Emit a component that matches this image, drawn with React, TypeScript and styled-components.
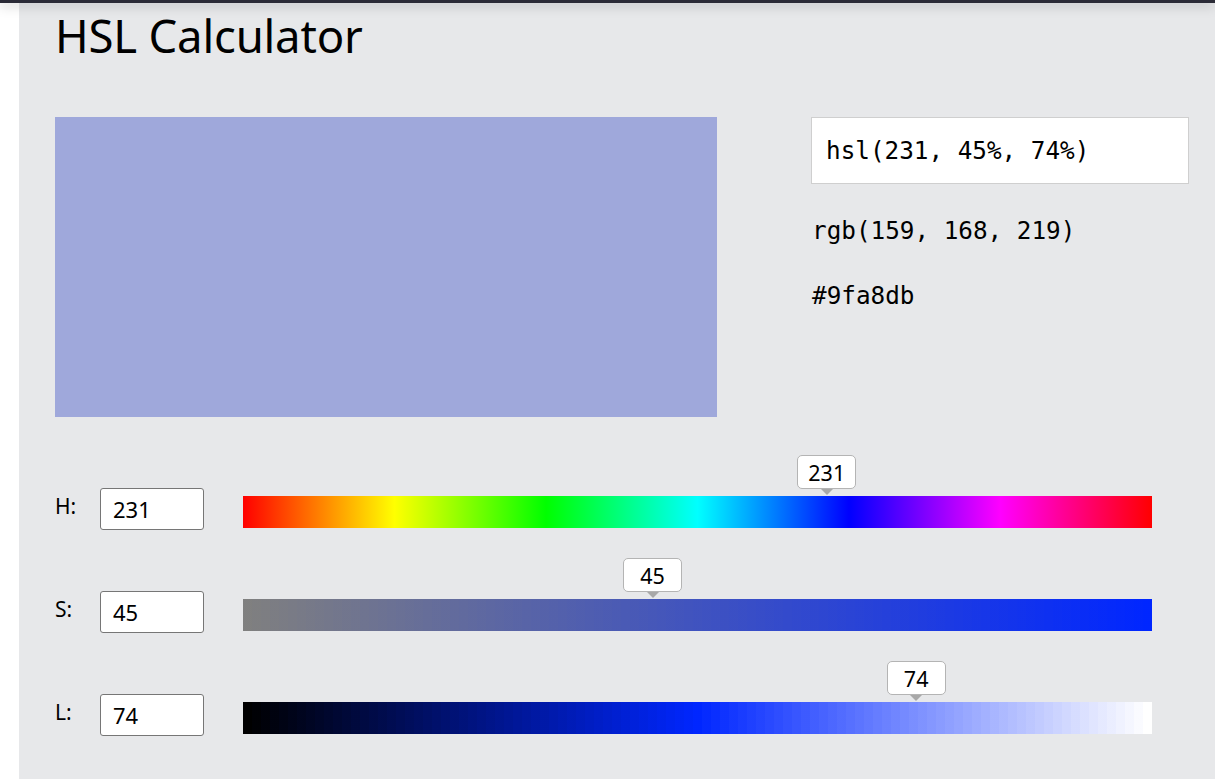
import React, { useState } from "react";
import styled, { createGlobalStyle } from "styled-components";

const GlobalStyle = createGlobalStyle`
  html, body {
    margin: 0;
    padding: 0;
    background: #ffffff;
    font-family: "Noto Sans", "Open Sans", sans-serif;
    color: #000;
  }
`;

const TopBar = styled.div`
  height: 3px;
  background: #2b2b37;
  box-shadow: 0 2px 12px rgba(0, 0, 0, 0.35);
  position: relative;
  z-index: 2;
`;

const Page = styled.div`
  margin-left: 19px;
  background: #e7e8ea;
  min-height: 776px;
  padding: 0 26px 0 36px;
  box-sizing: border-box;
`;

const Title = styled.h1`
  margin: 0;
  padding-top: 2px;
  height: 114px;
  box-sizing: border-box;
  font-size: 45.5px;
  font-weight: 400;
  line-height: 60px;
  letter-spacing: -0.2px;
`;

const Top = styled.div`
  display: flex;
  gap: 94px;
`;

const Swatch = styled.div<{ $color: string }>`
  width: 662px;
  height: 300px;
  background: ${(p) => p.$color};
`;

const Codes = styled.div`
  width: 378px;
  display: flex;
  flex-direction: column;
  font-family: "DejaVu Sans Mono", "Liberation Mono", monospace;
  font-size: 24.3px;
`;

const CodeBox = styled.div`
  height: 67px;
  margin-bottom: 14px;
  box-sizing: border-box;
  background: #fff;
  border: 1px solid #cfcfcf;
  padding-left: 14px;
  display: flex;
  align-items: center;
`;

const CodeLine = styled.div`
  height: 65px;
  display: flex;
  align-items: center;
  padding-left: 1px;
`;

const Sliders = styled.div`
  padding-top: 71px;
  display: flex;
  flex-direction: column;
  gap: 61px;
`;

const Row = styled.div`
  display: flex;
  align-items: center;
  height: 42px;
`;

const Label = styled.div`
  width: 45px;
  font-size: 21px;
  margin-top: -6px;
`;

const NumInput = styled.input`
  width: 104px;
  height: 42px;
  box-sizing: border-box;
  border: 1px solid #767676;
  border-radius: 3px;
  background: #fff;
  padding: 0 0 0 12px;
  font-family: "Noto Sans", "Open Sans", sans-serif;
  font-size: 22px;
  color: #000;
  outline: none;
`;

const Track = styled.div<{ $bg: string }>`
  position: relative;
  margin-left: 39px;
  margin-top: 6px;
  width: 909px;
  height: 32px;
  background: ${(p) => p.$bg};
`;

const Tip = styled.div`
  position: absolute;
  bottom: 39px;
  width: 59px;
  height: 34px;
  box-sizing: border-box;
  margin-left: -29px;
  background: #fff;
  border: 1px solid #b4b4b4;
  border-radius: 5px;
  display: flex;
  align-items: center;
  justify-content: center;
  font-size: 21.5px;

  &::after {
    content: "";
    position: absolute;
    left: 50%;
    bottom: -7px;
    margin-left: -6px;
    border-left: 6px solid transparent;
    border-right: 6px solid transparent;
    border-top: 6px solid #a8a8a8;
  }
`;

function hslToRgb(h: number, s: number, l: number) {
  s /= 100;
  l /= 100;
  const k = (n: number) => (n + h / 30) % 12;
  const a = s * Math.min(l, 1 - l);
  const f = (n: number) =>
    l - a * Math.max(-1, Math.min(k(n) - 3, Math.min(9 - k(n), 1)));
  return [f(0), f(8), f(4)].map((v) => Math.round(v * 255));
}

// hard-stop bands, like the stepped slider backgrounds
function stepped(steps: number, color: (t: number) => string) {
  const stops: string[] = [];
  for (let i = 0; i < steps; i++) {
    const a = ((i / steps) * 100).toFixed(3);
    const b = (((i + 1) / steps) * 100).toFixed(3);
    const c = color(i / (steps - 1));
    stops.push(`${c} ${a}%`, `${c} ${b}%`);
  }
  return `linear-gradient(to right, ${stops.join(", ")})`;
}

const hueBg = `linear-gradient(to right, ${[0, 60, 120, 180, 240, 300, 360]
  .map((d) => `hsl(${d}, 100%, 50%) ${((d / 360) * 100).toFixed(3)}%`)
  .join(", ")})`;

type Channel = { key: string; value: number; max: number; bg: string };

const SliderRow: React.FC<{ ch: Channel; onChange: (v: number) => void }> = ({
  ch,
  onChange,
}) => (
  <Row>
    <Label>{ch.key}:</Label>
    <NumInput
      value={ch.value}
      onChange={(e) => onChange(Number(e.target.value) || 0)}
    />
    <Track $bg={ch.bg}>
      <Tip style={{ left: `${(ch.value / ch.max) * 100}%` }}>{ch.value}</Tip>
    </Track>
  </Row>
);

export default function App() {
  const [h, setH] = useState(231);
  const [s, setS] = useState(45);
  const [l, setL] = useState(74);

  const [r, g, b] = hslToRgb(h, s, l);
  const hex =
    "#" + [r, g, b].map((v) => v.toString(16).padStart(2, "0")).join("");

  const channels: Channel[] = [
    { key: "H", value: h, max: 360, bg: hueBg },
    {
      key: "S",
      value: s,
      max: 100,
      bg: stepped(101, (t) => `hsl(${h}, ${Math.round(t * 100)}%, 50%)`),
    },
    {
      key: "L",
      value: l,
      max: 100,
      bg: stepped(101, (t) => `hsl(${h}, 100%, ${Math.round(t * 100)}%)`),
    },
  ];
  const setters = [setH, setS, setL];

  return (
    <>
      <GlobalStyle />
      <TopBar />
      <Page>
        <Title>HSL Calculator</Title>
        <Top>
          <Swatch $color={`hsl(${h}, ${s}%, ${l}%)`} />
          <Codes>
            <CodeBox>{`hsl(${h}, ${s}%, ${l}%)`}</CodeBox>
            <CodeLine>{`rgb(${r}, ${g}, ${b})`}</CodeLine>
            <CodeLine>{hex}</CodeLine>
          </Codes>
        </Top>
        <Sliders>
          {channels.map((ch, i) => (
            <SliderRow key={ch.key} ch={ch} onChange={setters[i]} />
          ))}
        </Sliders>
      </Page>
    </>
  );
}
